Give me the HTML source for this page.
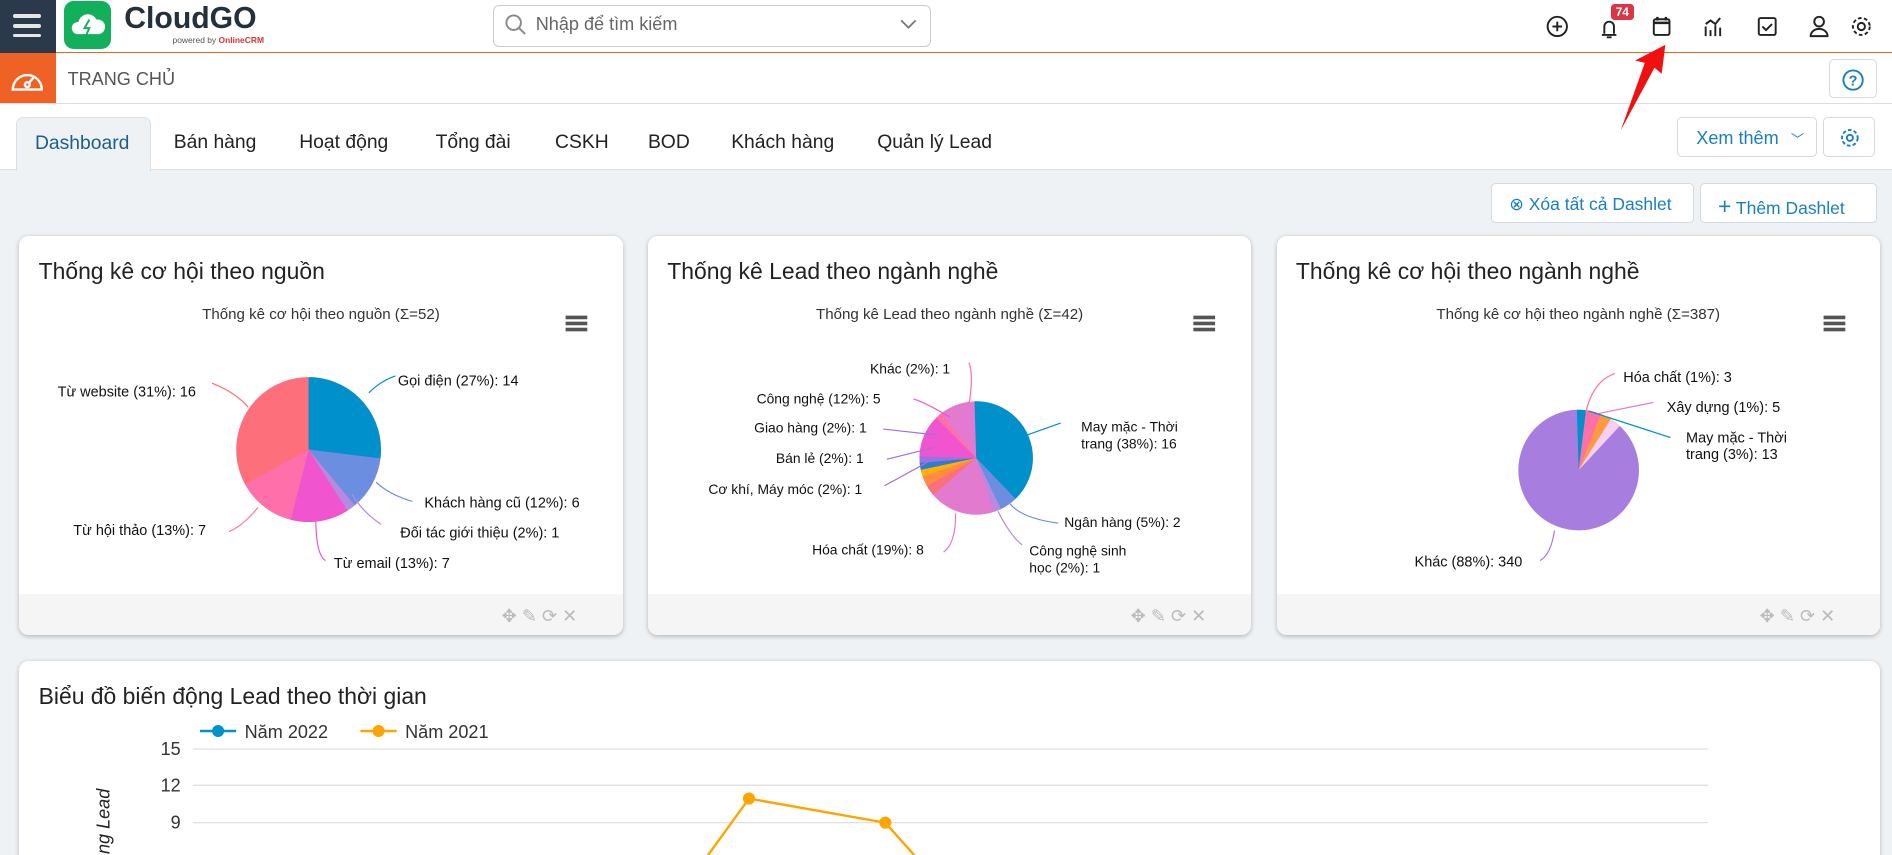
<!DOCTYPE html>
<html><head><meta charset="utf-8"><style>
*{box-sizing:border-box;margin:0;padding:0}
html,body{width:1892px;height:855px;overflow:hidden;background:#eff2f5}
#w{zoom:1.2066;width:1568px;height:709px;position:relative;overflow:hidden;font-family:"Liberation Sans","DejaVu Sans",sans-serif;color:#222;background:#eff2f5}
.abs{position:absolute}
.top{left:0;top:0;width:1568px;height:44px;background:#fff;border-bottom:1px solid #f06125}
.ham{left:0;top:0;width:46px;height:44px;background:#2b3a4a}
.ham i{position:absolute;left:11px;width:23px;height:3px;background:#e6e6e6;border-radius:2px}
.sub{left:0;top:44px;width:1568px;height:42px;background:#fff;border-bottom:1px solid #ddd}
.tabs{left:0;top:86px;width:1568px;height:55px;background:#fff;border-bottom:1px solid #dde}
.tab{position:absolute;top:30px;font-size:16px;color:#222}
.card{background:#fff;border-radius:8px;box-shadow:0 1px 4px rgba(0,0,0,.25);overflow:hidden}
.card h3{font-weight:normal;font-size:19px;position:absolute;left:16px;top:18px;color:#222}
.ct{position:absolute;top:58px;width:100%;text-align:center;font-size:12.5px;color:#333}
.foot{position:absolute;left:0;bottom:0;width:100%;height:34px;background:#f5f5f5}
.btn{background:#fff;border:1px solid #d5dae0;border-radius:4px;color:#1a7fc1;font-size:15px}
svg text{font-family:"Liberation Sans","DejaVu Sans",sans-serif}
</style></head><body><div id="w">
<div class="abs top"></div>
<div class="abs ham"><i style="top:12px"></i><i style="top:20px"></i><i style="top:28px"></i></div>
<div class="abs" style="left:53px;top:1px;width:39px;height:40px;background:#13b05b;border-radius:8px"></div>
<svg class="abs" style="left:58px;top:8px" width="30" height="26"><path d="M6 20a5 5 0 0 1 1-10a8 8 0 0 1 15-2a6 6 0 0 1 2 12z" fill="#fff"/><path d="M16 8l-4 7h4l-3 7" stroke="#13b05b" stroke-width="1.6" fill="none"/></svg>
<div class="abs" style="left:103px;top:2px;font-size:25px;font-weight:bold;color:#25303d">CloudGO</div>
<div class="abs" style="left:143px;top:29px;font-size:7px;color:#555">powered by <b style="color:#d33">OnlineCRM</b></div>
<div class="abs" style="left:409px;top:4px;width:363px;height:35px;border:1px solid #ccc;border-radius:5px"></div>
<svg class="abs" style="left:418px;top:11px" width="20" height="20"><circle cx="8" cy="8" r="6" stroke="#888" stroke-width="1.6" fill="none"/><path d="M12.5 12.5l5 5" stroke="#888" stroke-width="1.6"/></svg>
<div class="abs" style="left:444px;top:12px;font-size:15px;color:#666">Nhập để tìm kiếm</div>
<svg class="abs" style="left:746px;top:15px" width="14" height="10"><path d="M1 2l6 6 6-6" stroke="#777" stroke-width="1.5" fill="none"/></svg>
<svg class="abs" style="left:1280px;top:10px" width="280" height="24" fill="none" stroke="#222" stroke-width="1.6">
<circle cx="11" cy="12" r="8"/><path d="M11 8v8M7 12h8"/>
<path d="M48 19h12M50 18v-6a4 4 0 0 1 8 0v6M52 21h4"/>
<rect x="91" y="6" width="13" height="13" rx="1.5"/><path d="M91 9h13M94 4v3M101 4v3" stroke-width="2"/>
<path d="M134 20v-8M138 20v-5M142 20v-9M146 20v-7M134 10l4-3 4 3 4-5"/>
<rect x="178" y="5" width="14" height="14" rx="1.5"/><path d="M181 12l3 3 5-5"/>
<circle cx="228" cy="8" r="4"/><path d="M221 20a7 6 0 0 1 14 0z"/>
<circle cx="263" cy="12" r="3"/><circle cx="263" cy="12" r="7" stroke-dasharray="3 2"/>
</svg>
<div class="abs" style="left:1335px;top:3px;background:#dc3545;color:#fff;font-size:10px;font-weight:bold;padding:1px 4px;border-radius:3px">74</div>
<div class="abs sub"></div>
<div class="abs" style="left:0;top:44px;width:46px;height:41px;background:#f06125"></div>
<svg class="abs" style="left:7px;top:52px" width="32" height="26" fill="none" stroke="#fff" stroke-width="2"><path d="M4 22a12 12 0 1 1 24 0z"/><circle cx="16" cy="18" r="2"/><path d="M17 17l5-6"/></svg>
<div class="abs" style="left:56px;top:57px;font-size:15px;color:#555">TRANG CHỦ</div>
<div class="abs btn" style="left:1516px;top:49px;width:40px;height:32px"></div>
<svg class="abs" style="left:1526px;top:56px" width="20" height="20"><circle cx="10" cy="10" r="8" stroke="#1a7fc1" stroke-width="1.6" fill="none"/><text x="10" y="14.5" font-size="12" font-weight="bold" fill="#1a7fc1" text-anchor="middle">?</text></svg>
<div class="abs tabs"></div>
<div class="abs" style="left:13px;top:97px;width:112px;height:45px;background:#eff2f5;border:1px solid #dde;border-bottom:none;border-radius:6px 6px 0 0"></div>
<div class="tab" style="left:29px;top:110px;color:#1a5f8c">Dashboard</div>
<div class="tab" style="left:144px;top:109px">Bán hàng</div>
<div class="tab" style="left:248px;top:109px">Hoạt động</div>
<div class="tab" style="left:361px;top:109px">Tổng đài</div>
<div class="tab" style="left:460px;top:109px">CSKH</div>
<div class="tab" style="left:537px;top:109px">BOD</div>
<div class="tab" style="left:606px;top:109px">Khách hàng</div>
<div class="tab" style="left:727px;top:109px">Quản lý Lead</div>
<div class="abs btn" style="left:1390px;top:97px;width:116px;height:33px;padding:8px 0 0 15px">Xem thêm <span style="font-size:11px;margin-left:6px">﹀</span></div>
<div class="abs btn" style="left:1511px;top:97px;width:43px;height:33px"></div>
<svg class="abs" style="left:1524px;top:105px" width="18" height="18" fill="none" stroke="#1a7fc1" stroke-width="1.6"><circle cx="9" cy="9" r="2.5"/><circle cx="9" cy="9" r="6.5" stroke-dasharray="3 1.8"/></svg>
<div class="abs btn" style="left:1236px;top:152px;width:168px;height:33px;padding:8px 0 0 14px;font-size:14.5px">⊗ Xóa tất cả Dashlet</div>
<div class="abs btn" style="left:1409px;top:152px;width:147px;height:33px;padding:7px 0 0 14px;font-size:14.5px"><span style="font-size:19px">+</span> Thêm Dashlet</div>

<!-- card 1 -->
<div class="abs card" style="left:16px;top:196px;width:500px;height:330px">
<h3>Thống kê cơ hội theo nguồn</h3>
<div class="ct" style="left:0">Thống kê cơ hội theo nguồn (Σ=52)</div>
<div class="foot"></div>
<svg class="abs" style="left:0;top:0" width="500" height="330">
<g transform="translate(240,177) rotate(-90)"><g fill="none" stroke-width="60">
<circle r="30" stroke="#fd6f7a" pathLength="100" stroke-dasharray="100 0"/>
<circle r="30" stroke="#0090cc" pathLength="100" stroke-dasharray="27 73"/>
<circle r="30" stroke="#6b8ee0" pathLength="100" stroke-dasharray="12 88" stroke-dashoffset="-27"/>
<circle r="30" stroke="#b58ae0" pathLength="100" stroke-dasharray="2 98" stroke-dashoffset="-39"/>
<circle r="30" stroke="#f055cf" pathLength="100" stroke-dasharray="13 87" stroke-dashoffset="-41"/>
<circle r="30" stroke="#ff6faa" pathLength="100" stroke-dasharray="13 87" stroke-dashoffset="-54"/>
</g></g>
<g fill="none" stroke-width="1"><path d="M290 130q10-10 22-14" stroke="#0090cc"/><path d="M296 204q10 10 30 16" stroke="#6b8ee0"/><path d="M276 214q8 14 24 25" stroke="#b58ae0"/><path d="M246 234q0 30 8 35" stroke="#f055cf"/><path d="M198 225q-12 15-24 20" stroke="#ff6faa"/><path d="M190 142q-10-12-30-20" stroke="#fd6f7a"/></g>
<g font-size="12" fill="#111"><text x="314" y="124">Gọi điện (27%): 14</text><text x="336" y="225">Khách hàng cũ (12%): 6</text><text x="316" y="250">Đối tác giới thiệu (2%): 1</text><text x="261" y="275">Từ email (13%): 7</text><text x="45" y="248">Từ hội thảo (13%): 7</text><text x="32" y="133">Từ website (31%): 16</text></g>
<g fill="#555"><rect x="453" y="66" width="18" height="3"/><rect x="453" y="71" width="18" height="3"/><rect x="453" y="76" width="18" height="3"/></g>
<text x="400" y="320" font-size="15" fill="#bbb">✥ ✎ ⟳ ✕</text>
</svg></div>

<!-- card 2 -->
<div class="abs card" style="left:537px;top:196px;width:500px;height:330px">
<h3>Thống kê Lead theo ngành nghề</h3>
<div class="ct" style="left:0">Thống kê Lead theo ngành nghề (Σ=42)</div>
<div class="foot"></div>
<svg class="abs" style="left:0;top:0" width="500" height="330">
<g transform="translate(272,184) rotate(-90)"><g fill="none" stroke-width="47">
<circle r="23.5" stroke="#e27ad0" pathLength="100" stroke-dasharray="100 0"/>
<circle r="23.5" stroke="#0090cc" pathLength="100" stroke-dasharray="38 62"/>
<circle r="23.5" stroke="#6b8ee0" pathLength="100" stroke-dasharray="5 95" stroke-dashoffset="-38"/>
<circle r="23.5" stroke="#b58ae0" pathLength="100" stroke-dasharray="2 98" stroke-dashoffset="-43"/>
<circle r="23.5" stroke="#fd6f7a" pathLength="100" stroke-dasharray="3 97" stroke-dashoffset="-64"/>
<circle r="23.5" stroke="#ff8c40" pathLength="100" stroke-dasharray="3 97" stroke-dashoffset="-67"/>
<circle r="23.5" stroke="#ffb000" pathLength="100" stroke-dasharray="2 98" stroke-dashoffset="-70"/>
<circle r="23.5" stroke="#2a7fd0" pathLength="100" stroke-dasharray="2 98" stroke-dashoffset="-72"/>
<circle r="23.5" stroke="#a070e0" pathLength="100" stroke-dasharray="2 98" stroke-dashoffset="-74"/>
<circle r="23.5" stroke="#f055cf" pathLength="100" stroke-dasharray="12 88" stroke-dashoffset="-76"/>
<circle r="23.5" stroke="#ff6faa" pathLength="100" stroke-dasharray="2 98" stroke-dashoffset="-88"/>
</g></g>
<g font-size="11.5" fill="#111"><text x="184" y="114">Khác (2%): 1</text><text x="90" y="139">Công nghệ (12%): 5</text><text x="88" y="163">Giao hàng (2%): 1</text><text x="106" y="188">Bán lẻ (2%): 1</text><text x="50" y="214">Cơ khí, Máy móc (2%): 1</text><text x="136" y="264">Hóa chất (19%): 8</text><text x="359" y="162">May mặc - Thời</text><text x="359" y="176">trang (38%): 16</text><text x="345" y="241">Ngân hàng (5%): 2</text><text x="316" y="265">Công nghệ sinh</text><text x="316" y="279">học (2%): 1</text></g>
<g fill="none" stroke-width="1"><path d="M314 165l28-10" stroke="#0090cc"/><path d="M300 222q10 12 40 16" stroke="#6b8ee0"/><path d="M290 228q10 20 20 28" stroke="#b58ae0"/><path d="M255 230q0 25-10 32" stroke="#e27ad0"/><path d="M266 140q4-25 0-35" stroke="#ff6faa"/><path d="M250 150q-20-12-30-15" stroke="#f055cf"/><path d="M240 165l-45-5M238 175l-40 10M236 185l-40 22" stroke="#a070e0"/></g>
<g fill="#555"><rect x="452" y="66" width="18" height="3"/><rect x="452" y="71" width="18" height="3"/><rect x="452" y="76" width="18" height="3"/></g>
<text x="400" y="320" font-size="15" fill="#bbb">✥ ✎ ⟳ ✕</text>
</svg></div>

<!-- card 3 -->
<div class="abs card" style="left:1058px;top:196px;width:500px;height:330px">
<h3>Thống kê cơ hội theo ngành nghề</h3>
<div class="ct" style="left:0">Thống kê cơ hội theo ngành nghề (Σ=387)</div>
<div class="foot"></div>
<svg class="abs" style="left:0;top:0" width="500" height="330">
<g transform="translate(250,194) rotate(-90)"><g fill="none" stroke-width="50">
<circle r="25" stroke="#a77ee0" pathLength="100" stroke-dasharray="100 0"/>
<circle r="25" stroke="#0090cc" pathLength="100" stroke-dasharray="2 98"/>
<circle r="25" stroke="#ff6faa" pathLength="100" stroke-dasharray="4 96" stroke-dashoffset="-2"/>
<circle r="25" stroke="#ff9a40" pathLength="100" stroke-dasharray="3 97" stroke-dashoffset="-6"/>
<circle r="25" stroke="#f6d0f0" pathLength="100" stroke-dasharray="3 97" stroke-dashoffset="-9"/>
</g></g>
<g font-size="12" fill="#111"><text x="287" y="121">Hóa chất (1%): 3</text><text x="323" y="146">Xây dựng (1%): 5</text><text x="339" y="171">May mặc - Thời</text><text x="339" y="185">trang (3%): 13</text><text x="114" y="274">Khác (88%): 340</text></g>
<g fill="none" stroke-width="1"><path d="M256 146q6-26 24-32" stroke="#ff6faa"/><path d="M262 148l50-10" stroke="#e27ad0"/><path d="M258 145l68 22" stroke="#0090cc"/><path d="M230 244q-3 20-12 25" stroke="#a77ee0"/></g>
<g fill="#555"><rect x="453" y="66" width="18" height="3"/><rect x="453" y="71" width="18" height="3"/><rect x="453" y="76" width="18" height="3"/></g>
<text x="400" y="320" font-size="15" fill="#bbb">✥ ✎ ⟳ ✕</text>
</svg></div>

<!-- line chart card -->
<div class="abs card" style="left:16px;top:548px;width:1542px;height:200px">
<h3>Biểu đồ biến động Lead theo thời gian</h3>
<svg class="abs" style="left:0;top:0" width="1542" height="200">
<g font-size="15" fill="#333"><line x1="150" y1="58" x2="180" y2="58" stroke="#0090cc" stroke-width="2"/><circle cx="165" cy="58" r="5" fill="#0090cc"/><text x="187" y="64">Năm 2022</text>
<line x1="283" y1="58" x2="313" y2="58" stroke="#ffa500" stroke-width="2"/><circle cx="298" cy="58" r="5" fill="#ffa500"/><text x="320" y="64">Năm 2021</text></g>
<g stroke="#ddd"><line x1="144" y1="73" x2="1400" y2="73"/><line x1="144" y1="103" x2="1400" y2="103"/><line x1="144" y1="134" x2="1400" y2="134"/></g>
<g font-size="15" fill="#333" text-anchor="end"><text x="134" y="78">15</text><text x="134" y="108">12</text><text x="134" y="139">9</text></g>
<text transform="translate(75,160) rotate(-90)" font-size="15" font-style="italic" fill="#222">ng Lead</text>
<polyline points="550,190 605,114 718,134 750,170" fill="none" stroke="#ffa500" stroke-width="2"/>
<circle cx="605" cy="114" r="5" fill="#ffa500"/><circle cx="718" cy="134" r="5" fill="#ffa500"/>
</svg></div>
<svg class="abs" style="left:1330px;top:33px" width="60" height="75"><path d="M50 4l-3 24-6-5-28 52 20-56-8-2z" fill="#f01010"/></svg>
</div></body></html>
